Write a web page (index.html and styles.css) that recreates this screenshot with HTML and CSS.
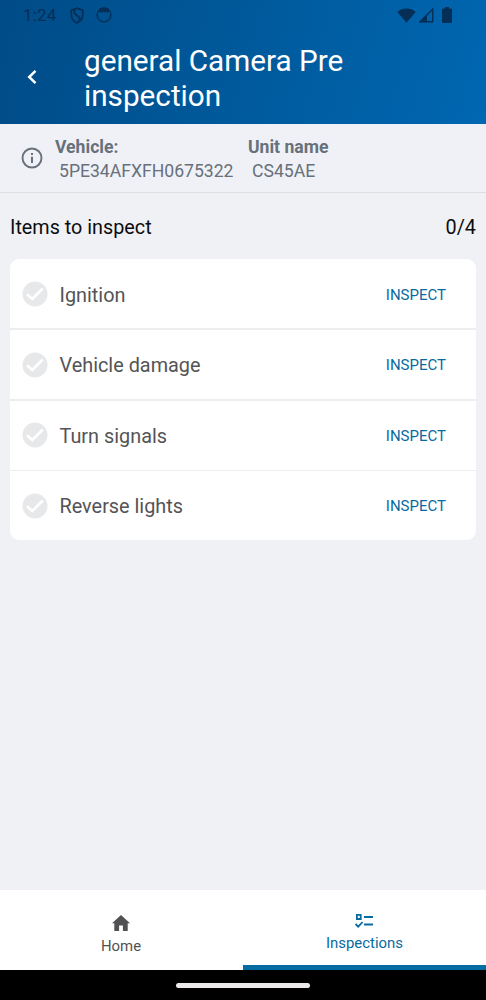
FILE: index.html
```html
<!DOCTYPE html>
<html lang="en">
<head>
  <meta charset="UTF-8">
  <meta name="viewport" content="width=device-width, initial-scale=1.0">
  <title>Inspection</title>
  <link rel="stylesheet" href="styles.css">
</head>
<body>
  <div class="screen">
    <header class="header">
      <div class="statusBar">
        <span class="time">1:24</span>
        <svg class="shield" width="14" height="17" viewBox="0 0 14 17" fill="none" stroke="currentColor" stroke-width="1.8">
          <path d="M7 1.2L12.8 3.3V7.5C12.8 11.5 10.5 14.3 7 15.8C3.5 14.3 1.2 11.5 1.2 7.5V3.3Z"/>
          <path d="M4.5 3V6.5L9.5 10.5V13.5"/>
        </svg>
        <svg class="face" width="16" height="16" viewBox="0 0 16 16">
          <circle cx="8" cy="8" r="6.9" fill="none" stroke="currentColor" stroke-width="1.4"/>
          <path d="M3 2C5 0 11 0 13 2L12.5 5.5H11L10 4.8L8.8 5.5L7.5 4.8L6.3 5.5H3.5Z" fill="currentColor"/>
        </svg>
        <div class="statusRight">
          <svg width="19" height="15" viewBox="0 0 19 15" fill="currentColor">
            <path d="M.3 4C5.5-.6 13.5-.6 18.7 4L9.5 14.8Z"/>
          </svg>
          <svg width="16" height="16" viewBox="0 0 16 16">
            <path d="M2.2 14.8L14.7 2.2V14.8Z" fill="none" stroke="currentColor" stroke-width="1.4"/>
            <path d="M1 15.3L9 7.5V15.3Z" fill="currentColor"/>
          </svg>
          <svg class="battery" width="10" height="16" viewBox="0 0 10 16" fill="currentColor">
            <path d="M3 0H7V1.6H8.8Q10 1.6 10 2.8V14.8Q10 16 8.8 16H1.2Q0 16 0 14.8V2.8Q0 1.6 1.2 1.6H3Z"/>
          </svg>
        </div>
      </div>
      <div class="titleBar">
        <svg class="back" width="10" height="16" viewBox="0 0 10 16" fill="none" stroke="currentColor" stroke-width="2.5">
          <path d="M8.5 1.8L2.2 8L8.5 14.2"/>
        </svg>
        <h1 class="title">general Camera Pre<br>inspection</h1>
      </div>
    </header>

    <section class="vehicle">
      <svg class="info" width="22" height="22" viewBox="0 0 22 22">
        <circle cx="11" cy="11" r="9.5" fill="none" stroke="currentColor" stroke-width="1.9"/>
        <path d="M10 6H12V8H10ZM10 9.8H12V16H10Z" fill="currentColor"/>
      </svg>
      <div class="field vin">
        <div class="label">Vehicle:</div>
        <div class="value">5PE34AFXFH0675322</div>
      </div>
      <div class="field unit">
        <div class="label">Unit name</div>
        <div class="value">CS45AE</div>
      </div>
    </section>

    <main class="main">
      <div class="summary">
        <span class="summaryText">Items to inspect</span>
        <span>0/4</span>
      </div>
      <div class="list">
        <div class="item">
          <svg class="check" viewBox="0 0 26 26"><circle cx="13" cy="13" r="12.5"/><path d="M5 13.2L10.3 18L20.8 7.5"/></svg>
          <span class="name">Ignition</span>
          <span class="inspect">INSPECT</span>
        </div>
        <div class="item">
          <svg class="check" viewBox="0 0 26 26"><circle cx="13" cy="13" r="12.5"/><path d="M5 13.2L10.3 18L20.8 7.5"/></svg>
          <span class="name">Vehicle damage</span>
          <span class="inspect">INSPECT</span>
        </div>
        <div class="item">
          <svg class="check" viewBox="0 0 26 26"><circle cx="13" cy="13" r="12.5"/><path d="M5 13.2L10.3 18L20.8 7.5"/></svg>
          <span class="name">Turn signals</span>
          <span class="inspect">INSPECT</span>
        </div>
        <div class="item">
          <svg class="check" viewBox="0 0 26 26"><circle cx="13" cy="13" r="12.5"/><path d="M5 13.2L10.3 18L20.8 7.5"/></svg>
          <span class="name">Reverse lights</span>
          <span class="inspect">INSPECT</span>
        </div>
      </div>
    </main>

    <nav class="tabs">
      <div class="tab home">
        <svg width="18" height="16" viewBox="0 0 18 16" fill="currentColor">
          <path d="M9 0L18 8.3H15.7V16H10.9V10.5H7.1V16H2.3V8.3H0Z"/>
        </svg>
        <span>Home</span>
      </div>
      <div class="tab active">
        <svg width="18" height="14" viewBox="0 0 18 14" fill="none" stroke="currentColor" stroke-width="1.8">
          <path d="M1.9 .9H5.7V5H1.9ZM9 3H18M9 10.5H18M.6 10L3.2 12.6L7.6 8"/>
        </svg>
        <span>Inspections</span>
      </div>
    </nav>
    <div class="gestureBar"><div class="handle"></div></div>
  </div>
</body>
</html>
```
FILE: styles.css
```css
* {
  box-sizing: border-box;
}

body {
  margin: 0;
  font-family: Roboto, sans-serif;
}
svg {
  display: block;
  flex-shrink: 0;
}
.screen {
  width: 486px;
  height: 1000px;
  display: flex;
  flex-direction: column;
  background-color: #f0f1f4;
}

.header {
  height: 124px;
  background: linear-gradient(105deg, #004b87 0%, #00599b 48%, #0067b1 100%);
}
.statusBar {
  height: 30px;
  display: flex;
  align-items: center;
  padding: 0 34px 0 23px;
  color: #052f56;
}
.time {
  width: 47px;
  font-size: 17px;
  letter-spacing: 0.2px;
}
.face {
  margin-left: 12px;
}
.statusRight {
  display: flex;
  align-items: center;
  gap: 2px;
  margin-left: auto;
}
.battery {
  margin-left: 6px;
}
.titleBar {
  display: flex;
  padding: 13px 0 0 27px;
  color: white;
}
.back {
  margin-top: 26px;
}
.title {
  margin: 0 0 0 47px;
  font-size: 29.7px;
  font-weight: 400;
  line-height: 35px;
}

.vehicle {
  height: 69px;
  display: flex;
  padding: 11px 0 0 21px;
  color: #67707b;
  background-color: #f0f1f6;
  border-bottom: 1px solid #dddee3;
}
.info {
  margin-top: 12px;
}
.field {
  font-size: 17.6px;
  line-height: 24px;
}
.vin {
  width: 193px;
  margin-left: 12px;
}
.label {
  font-weight: 700;
}
.value {
  padding-left: 4px;
}

.main {
  flex: 1;
  padding: 0 10px;
}
.summary {
  height: 66px;
  display: flex;
  align-items: center;
  justify-content: space-between;
  padding-top: 2px;
  font-size: 19.8px;
  color: #0c0c0e;
}
.list {
  height: 281px;
  display: grid;
  grid-template-rows: 71px 71px 70px 69px;
  background-color: white;
  border-radius: 9px;
}
.item {
  display: flex;
  align-items: center;
  padding: 1px 30px 0 12px;
  border-bottom: 2px solid #eeeef0;
}
.item:nth-child(2) {
  padding-top: 0;
}
.item:nth-child(3) {
  padding-top: 0;
  padding-bottom: 1px;
  border-bottom-width: 1px;
}
.item:last-child {
  padding-top: 0;
  border-bottom: none;
}
.check {
  width: 26px;
  height: 26px;
}
.check circle {
  fill: #e7e8ea;
}
.check path {
  fill: none;
  stroke: white;
  stroke-width: 2.6;
}
.name {
  margin-left: 11.5px;
  padding-top: 2px;
  font-size: 19.85px;
  color: #545456;
}
.inspect {
  margin-left: auto;
  padding-top: 1px;
  font-size: 15px;
  color: #086a9f;
}

.tabs {
  height: 80px;
  display: grid;
  grid-template-columns: 1fr 1fr;
  background-color: white;
}
.tab {
  display: flex;
  flex-direction: column;
  align-items: center;
  font-size: 14.9px;
  line-height: 18px;
}
.tab span {
  margin-top: 6px;
}
.home {
  padding: 25px 1px 0 0;
  color: #515153;
}
.active {
  padding-top: 24px;
  color: #086a9f;
  border-bottom: 5px solid #066aa3;
}
.active svg {
  margin-right: 2px;
}
.gestureBar {
  height: 30px;
  display: flex;
  align-items: center;
  justify-content: center;
  background-color: black;
}
.handle {
  width: 134px;
  height: 5px;
  border-radius: 3px;
  background-color: #ebe9e9;
}
```
